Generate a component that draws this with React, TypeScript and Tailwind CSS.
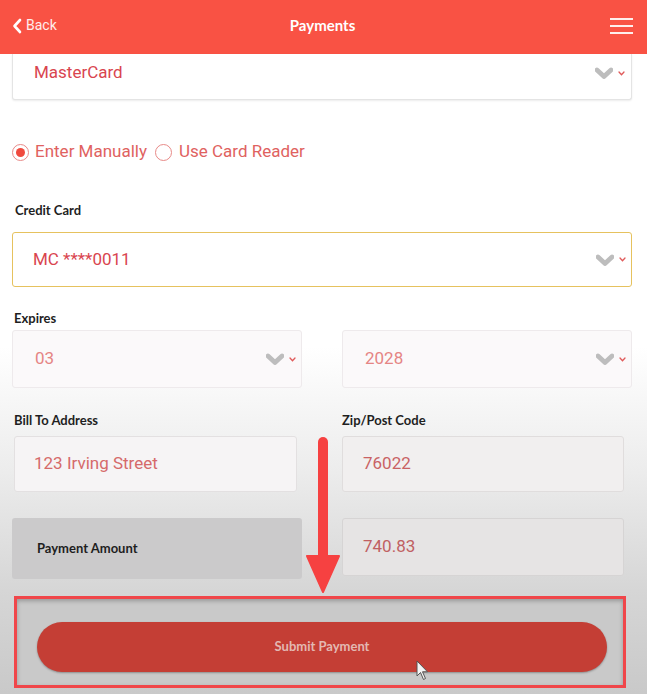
import React from 'react';

function Chevrons() {
  return (
    <div className="flex items-center gap-[5px]">
      <svg width="18" height="12" viewBox="0 0 18 12">
        <path d="M2 3 L9 9.5 L16 3" fill="none" stroke="#bdbdbd" strokeWidth="4.8" strokeLinecap="round" strokeLinejoin="round" />
      </svg>
      <svg width="7" height="5" viewBox="0 0 7 5">
        <path d="M1 1 L3.5 3.8 L6 1" fill="none" stroke="#e05a5a" strokeWidth="1.3" strokeLinecap="round" />
      </svg>
    </div>
  );
}

function Label({ children }: { children: React.ReactNode }) {
  return (
    <div className="text-[13px] font-bold text-[#1f1f1f] leading-none font-['Lato',sans-serif]">{children}</div>
  );
}

export default function App() {
  return (
    <div className="relative h-[694px] w-[647px] overflow-hidden bg-[linear-gradient(to_bottom,#ffffff_0%,#ffffff_50%,#ececec_68%,#d6d6d6_85%,#c9c9c9_100%)] font-['Roboto',sans-serif]">
      {/* header */}
      <header className="flex h-[54px] items-center justify-between bg-[#f95244] pb-[3px] pl-[12px] pr-[14px] text-white">
        <div className="flex w-[80px] items-center gap-[4px] text-[14px] text-white/90">
          <svg width="10" height="16" viewBox="0 0 10 16">
            <path d="M8 2 L2.5 8 L8 14" fill="none" stroke="white" strokeWidth="2.6" strokeLinecap="round" strokeLinejoin="round" />
          </svg>
          <span>Back</span>
        </div>
        <div className="text-[15px] font-bold font-['Lato',sans-serif]">Payments</div>
        <div className="flex w-[80px] justify-end">
          <div className="flex w-[23px] flex-col gap-[5px]">
            <span className="h-[2px] bg-white/90" />
            <span className="h-[2px] bg-white/90" />
            <span className="h-[2px] bg-white/90" />
          </div>
        </div>
      </header>

      {/* card type select (scrolled, top clipped) */}
      <div className="mx-[12px] flex h-[46px] w-[620px] items-center justify-between rounded-b-[3px] border-x border-b border-[#e4e4e4] bg-white pb-[7px] pl-[21px] pr-[6px] shadow-[0_1px_2px_rgba(0,0,0,0.08)]">
        <span className="text-[17px] text-[#d9454f]">MasterCard</span>
        <Chevrons />
      </div>

      {/* radios */}
      <div className="mt-[42px] flex h-[20px] items-center pl-[12px] text-[17px] text-[#e0625f]">
        <span className="flex h-[17px] w-[17px] items-center justify-center rounded-full border border-[#e88a88]">
          <span className="h-[9px] w-[9px] rounded-full bg-[#f04a3e]" />
        </span>
        <span className="ml-[6px]">Enter Manually</span>
        <span className="ml-[8px] h-[17px] w-[17px] rounded-full border border-[#e88a88]" />
        <span className="ml-[7px]">Use Card Reader</span>
      </div>

      {/* credit card */}
      <div className="mt-[42px] pl-[15px]">
        <Label>Credit Card</Label>
      </div>
      <div className="mx-[12px] mt-[15px] flex h-[55px] w-[620px] items-center justify-between rounded-[3px] border-[1.5px] border-[#e6c25e] bg-white pl-[20px] pr-[5px]">
        <span className="text-[17px] text-[#d9454f]">MC ****0011</span>
        <Chevrons />
      </div>

      {/* expires */}
      <div className="mt-[25px] pl-[14px]">
        <Label>Expires</Label>
      </div>
      <div className="mx-[12px] mt-[5px] grid w-[620px] grid-cols-2 gap-[40px]">
        <div className="flex h-[58px] items-center justify-between rounded-[3px] border border-[#eeeaec] bg-[#fbf9fa] pl-[22px] pr-[5px]">
          <span className="text-[17px] text-[#e58584]">03</span>
          <Chevrons />
        </div>
        <div className="flex h-[58px] items-center justify-between rounded-[3px] border border-[#eeeaec] bg-[#fbf9fa] pl-[22px] pr-[5px]">
          <span className="text-[17px] text-[#e58584]">2028</span>
          <Chevrons />
        </div>
      </div>

      {/* address */}
      <div className="mx-[12px] mt-[26px] grid w-[620px] grid-cols-2 gap-[40px]">
        <div className="pl-[2px]">
          <Label>Bill To Address</Label>
          <div className="mt-[9px] flex h-[56px] w-[283px] items-center rounded-[3px] border border-[#e3e0e1] bg-[#f6f4f5] pl-[19px] text-[17px] text-[#d56a6a]">
            123 Irving Street
          </div>
        </div>
        <div>
          <Label>Zip/Post Code</Label>
          <div className="mt-[9px] flex h-[56px] w-[282px] items-center rounded-[3px] border border-[#e0dddd] bg-[#f1efef] pl-[20px] text-[17px] text-[#c96264]">
            76022
          </div>
        </div>
      </div>

      {/* amount */}
      <div className="mx-[12px] mt-[26px] grid w-[620px] grid-cols-2 gap-[40px]">
        <div className="flex h-[61px] items-center rounded-[3px] bg-[#cbcacb] pl-[25px] text-[13px] font-bold text-[#1e1e1e] font-['Lato',sans-serif]">
          Payment Amount
        </div>
        <div className="flex h-[58px] w-[282px] items-center rounded-[3px] border border-[#d6d4d4] bg-[#e6e4e4] pl-[20px] text-[17px] text-[#c06062]">
          740.83
        </div>
      </div>

      {/* highlighted submit area */}
      <div className="mx-[14px] mt-[17px] flex h-[92px] w-[612px] items-start border-[3px] border-[#f0464a] bg-[#c9c9c9] pl-[20px] pt-[23px] shadow-[inset_0_2px_4px_rgba(0,0,0,0.25)]">
        <button className="h-[50px] w-[570px] rounded-full bg-[#c43e35] text-[13px] font-bold text-[#e3b8b2] shadow-[0_1px_2px_rgba(0,0,0,0.3)] font-['Lato',sans-serif]">
          Submit Payment
        </button>
      </div>

      {/* annotation arrow */}
      <svg className="absolute left-[300px] top-[432px]" width="46" height="164" viewBox="0 0 46 164">
        <path d="M23 10 L23 128" stroke="#f64141" strokeWidth="10" strokeLinecap="round" />
        <path d="M7 124 L39 124 L23 160 Z" fill="#f64141" stroke="#f64141" strokeWidth="2" strokeLinejoin="round" />
      </svg>

      {/* mouse cursor */}
      <svg className="absolute left-[416px] top-[660px]" width="14" height="22" viewBox="0 0 14 22">
        <path d="M1 1 L1 16 L4.5 12.5 L7.5 19.5 L9.5 18.5 L6.5 11.8 L11.5 11.8 Z" fill="#f4f4f4" stroke="#555" strokeWidth="1" strokeLinejoin="round" />
      </svg>
    </div>
  );
}
